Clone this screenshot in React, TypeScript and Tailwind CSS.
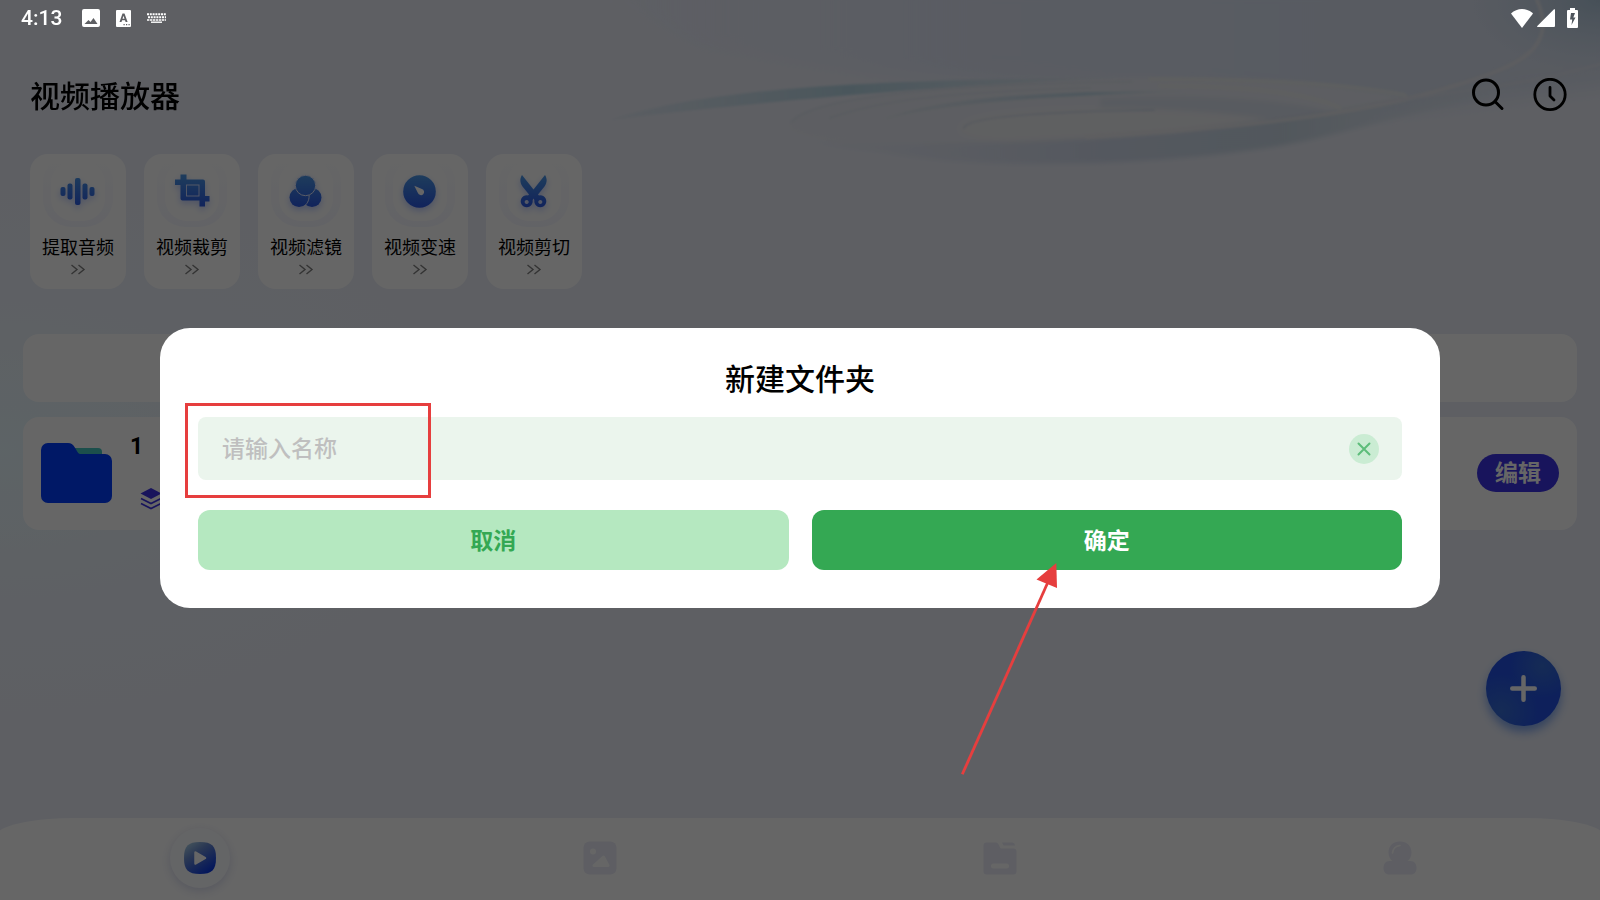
import { useState } from "react"

const tools = [
  { id: "audio", label: "提取音频" },
  { id: "crop", label: "视频裁剪" },
  { id: "filter", label: "视频滤镜" },
  { id: "speed", label: "视频变速" },
  { id: "cut", label: "视频剪切" },
]

const tabs = [
  { id: "video", label: "视频" },
  { id: "photo", label: "图片" },
  { id: "files", label: "文件" },
  { id: "me", label: "我的" },
]

function ToolIcon({ id }: { id: string }) {
  const fill = `url(#tool-${id})`
  return (
    <svg viewBox="0 0 36 38" className="w-9 h-[38px] drop-shadow-[0_3px_3px_rgba(40,90,255,0.3)]" aria-hidden="true">
      <defs>
        <linearGradient id={`tool-${id}`} gradientUnits="userSpaceOnUse" x1="0" y1="0" x2="0" y2="38">
          <stop offset="0" stopColor="#4f9ee8" />
          <stop offset="1" stopColor="#2853e4" />
        </linearGradient>
      </defs>
      {id === "audio" && (
        <g fill={fill}>
          <rect x="0.500" y="15" width="5" height="9" rx="2" />
          <rect x="7.500" y="11.500" width="5" height="16" rx="2" />
          <rect x="15" y="6" width="5.500" height="27" rx="2" />
          <rect x="22.500" y="11.500" width="5" height="16" rx="2" />
          <rect x="29.500" y="15" width="5" height="9" rx="2" />
        </g>
      )}
      {id === "crop" && (
        <g fill={fill}>
          <path
            fillRule="evenodd"
            d="M6.500 2.500h6v5H29a2 2 0 0 1 2 2V24h4.500v5.500H31v5h-5.500v-6H8.500a2 2 0 0 1-2-2V13H1V7.500h5.500zM12 12.500v12h13.500v-12z"
          />
          <rect x="13" y="13.500" width="11.500" height="10" />
        </g>
      )}
      {id === "filter" && (
        <g fill={fill}>
          <circle cx="11" cy="25.500" r="9.500" />
          <circle cx="24" cy="25.500" r="9.500" />
          <path d="M21 22c.6 5-1 9-4.500 12" fill="none" stroke="#dfe6ff" strokeWidth="1" />
          <circle cx="17.500" cy="13.500" r="10.200" stroke="#dfe6ff" strokeWidth="1" />
        </g>
      )}
      {id === "speed" && (
        <g>
          <circle cx="17.500" cy="19.500" r="16.300" fill={fill} />
          <path d="M12.300 13.700l7.600 3.200a3.200 3.200 0 1 1-4 4.100z" fill="#fff" />
        </g>
      )}
      {id === "cut" && (
        <g fill={fill}>
          <path d="M6 3c-2.500 4-2 8 .5 11.500L13 22.500l-1.800 2.200 5 3.800 1.300-2 1.300 2 5-3.800L22 22.500l6.500-8C31 11 31.500 7 29 3L17.500 17.500z" />
          <path
            fillRule="evenodd"
            d="M10.700 23.300a6 6 0 1 0 .01 0zm0 4.600a2 2 0 1 1-.01 0zM24.300 23.300a6 6 0 1 0 .01 0zm0 4.600a2 2 0 1 1-.01 0z"
          />
        </g>
      )}
    </svg>
  )
}

function TabIcon({ id }: { id: string }) {
  if (id === "video") {
    return (
      <span className="w-[60px] h-[60px] rounded-full bg-[#fbfcff] shadow-[0_3px_10px_rgba(130,140,200,0.3)] flex items-center justify-center">
        <svg viewBox="0 0 32 32" className="w-8 h-8" aria-hidden="true">
          <defs>
            <linearGradient id="play" x1="0.1" y1="0" x2="0.8" y2="1">
              <stop offset="0" stopColor="#b0d4e6" />
              <stop offset="0.35" stopColor="#6a8cd0" />
              <stop offset="1" stopColor="#0030e6" />
            </linearGradient>
          </defs>
          <path d="M16 0C28 0 32 4 32 16S28 32 16 32 0 28 0 16 4 0 16 0z" fill="url(#play)" />
          <path d="M11.500 10.500L21 16l-9.500 5.500z" fill="#fff" stroke="#fff" strokeWidth="2.500" strokeLinejoin="round" />
        </svg>
      </span>
    )
  }
  return (
    <svg viewBox="0 0 34 34" className="w-[34px] h-[34px]" fill="#ebecf8" aria-hidden="true">
      {id === "photo" && (
        <>
          <rect x="0.500" y="0.500" width="33" height="33" rx="6" />
          <circle cx="10" cy="10.500" r="3" fill="#fff" />
          <path d="M11 24.500L20.500 16l4.500 8.500z" fill="#fff" stroke="#fff" strokeWidth="3" strokeLinejoin="round" />
        </>
      )}
      {id === "files" && (
        <>
          <path d="M3.500 1.500h9.500c3.500 0 3 6 5.500 6h12a3 3 0 0 1 3 3v20a3 3 0 0 1-3 3h-27a3 3 0 0 1-3-3v-26a3 3 0 0 1 3-3z" />
          <path d="M19 1.500h10.500a3 3 0 0 1 2.500 3H20.500z" />
          <rect x="8" y="22.500" width="18" height="5" rx="2.500" fill="#fff" />
        </>
      )}
      {id === "me" && (
        <>
          <path d="M17 0.500c7 0 11.500 4.500 11.500 11 0 4-1.500 6.500-4 8.500h3c4 0 6 3 6 7s-2 6.500-6 6.500h-21c-4 0-6-2.500-6-6.500s2-7 6-7h3c-2.500-2-4-4.500-4-8.500 0-6.500 4.500-11 11.500-11z" />
          <path d="M9.500 12c.5-4.500 3.500-7 7.500-7.500" fill="none" stroke="#fff" strokeWidth="1.600" strokeLinecap="round" />
        </>
      )}
    </svg>
  )
}

// Soft galaxy-like wallpaper behind the header
function Wallpaper() {
  return (
    <svg className="absolute inset-0 w-full h-full" viewBox="0 0 1600 900" preserveAspectRatio="none" aria-hidden="true">
      <defs>
        <radialGradient id="mint" cx="0" cy="0.500" r="0.300">
          <stop offset="0" stopColor="#e8faff" stopOpacity="0.900" />
          <stop offset="1" stopColor="#ebf2fa" stopOpacity="0" />
        </radialGradient>
        <linearGradient id="sky" x1="0" y1="0" x2="1" y2="0">
          <stop offset="0" stopColor="#e3e9fb" stopOpacity="0" />
          <stop offset="0.400" stopColor="#e0e6f6" />
          <stop offset="1" stopColor="#dae2f1" />
        </linearGradient>
        <linearGradient id="teal" x1="0" y1="0" x2="1" y2="0">
          <stop offset="0" stopColor="#c3dcea" stopOpacity="0.200" />
          <stop offset="0.450" stopColor="#b9d8e6" />
          <stop offset="1" stopColor="#c3dcea" stopOpacity="0" />
        </linearGradient>
        <linearGradient id="azure" x1="0" y1="0" x2="1" y2="0">
          <stop offset="0" stopColor="#cfdcea" stopOpacity="0.300" />
          <stop offset="0.650" stopColor="#c2dae8" />
          <stop offset="1" stopColor="#c3dcea" stopOpacity="0" />
        </linearGradient>
        <linearGradient id="band" x1="0" y1="0" x2="1" y2="0">
          <stop offset="0" stopColor="#dde3f2" stopOpacity="0.200" />
          <stop offset="0.450" stopColor="#d2dbed" />
          <stop offset="0.700" stopColor="#ccdae7" />
          <stop offset="1" stopColor="#d9e3ef" stopOpacity="0.300" />
        </linearGradient>
        <radialGradient id="corner" cx="1" cy="0" r="0.080">
          <stop offset="0" stopColor="#b0c8dc" />
          <stop offset="1" stopColor="#c5d6ea" stopOpacity="0" />
        </radialGradient>
        <filter id="fine" x="-5%" y="-20%" width="110%" height="140%">
          <feGaussianBlur stdDeviation="0.800" />
        </filter>
        <filter id="soft" x="-10%" y="-40%" width="120%" height="180%">
          <feGaussianBlur stdDeviation="2.500" />
        </filter>
        <filter id="softer" x="-20%" y="-40%" width="140%" height="180%">
          <feGaussianBlur stdDeviation="9" />
        </filter>
      </defs>
      <rect width="1600" height="900" fill="#ebeef8" />
      <rect width="1600" height="900" fill="url(#mint)" />
      <path d="M560-20H1620V85L1400 112 1150 88 900 76 700 50z" fill="url(#sky)" filter="url(#softer)" />
      <rect width="1600" height="900" fill="url(#corner)" />
      <g filter="url(#soft)">
        <path d="M790 122C810 100 950 78 1130 78c150 0 240 10 280 22L1180 136 960 146C850 144 780 138 790 122z" fill="#e9ecf4" />
        <path d="M1100 98c110-4 190 2 232 14l-60 8c-50-8-110-12-172-12z" fill="#dde3f0" />
        <path d="M960 128c5-20 150-26 300-10-90 18-180 26-240 24-40-1-62-6-60-14z" fill="#eeeff3" />
        <path d="M800 140c80 8 270 2 380-8 120-14 200-28 310-50v16c-70 12-120 28-180 42-120 26-330 32-430 12-50-4-60-8-80-12z" fill="url(#band)" />
      </g>
      <g fill="none" strokeLinecap="round" filter="url(#fine)">
        <path d="M610 120C720 84 900 80 1140 77 920 86 740 104 610 120z" fill="url(#teal)" />
        <path d="M884 119c60-24 180-28 310-28-120 5-230 8-310 28z" fill="url(#azure)" />
        <path d="M792 122c16-20 120-38 340-40M830 118c50-18 120-26 260-30" stroke="#dfe5f0" strokeWidth="2" />
        <path d="M964 128c2-10 60-16 190-18" stroke="#cdd9e7" strokeWidth="1.400" />
        <path d="M1150 79c120 0 200 6 255 16M1160 86c90 0 150 8 180 22" stroke="#ecefee" strokeWidth="4" opacity="0.700" />
        <path d="M1537 0c22 50-20 66-80 85-100 32-220 42-370 52" stroke="#ecebee" strokeWidth="4" opacity="0.700" />
        <path d="M1600 64c-60 18-140 28-230 40" stroke="#e3e6ef" strokeWidth="3" opacity="0.700" />
      </g>
    </svg>
  )
}

function StatusBar() {
  return (
    <div className="fixed inset-x-0 top-0 z-20 h-9 pl-[21px] pr-[22px] flex items-center justify-between text-white">
      <div className="flex items-center">
        <span className="w-[61px] text-[21px] leading-9 font-medium">4:13</span>
        <svg viewBox="0 0 18 18" className="w-[18px] h-[18px] mr-4" aria-hidden="true">
          <path fillRule="evenodd" fill="#fff" d="M2 0h14a2 2 0 0 1 2 2v14a2 2 0 0 1-2 2H2a2 2 0 0 1-2-2V2a2 2 0 0 1 2-2zM2.500 15h13l-4-6-3 4-2-2z" />
        </svg>
        <svg viewBox="0 0 15 17" className="w-[15px] h-[17px] mr-4" aria-hidden="true">
          <path fillRule="evenodd" fill="#fff" d="M1 0h13a1 1 0 0 1 1 1v15a1 1 0 0 1-1 1H1a1 1 0 0 1-1-1V1a1 1 0 0 1 1-1zM6.500 3.500L3.500 12h2l.6-1.700h2.900l.6 1.700h2L8.500 3.500zm1 2.200l1 3h-2zM7.500 14v1.200h1.200V14zm2.500 0v1.200h1.200V14zm2.500 0v1.200h1.200V14z" />
        </svg>
        <svg viewBox="0 0 19 10" className="w-[19px] h-[10px]" aria-hidden="true">
          <g stroke="#fff" fill="none" strokeWidth="2">
            <path d="M0 1.200h19" strokeDasharray="2 0.800" />
            <path d="M1 4.200h18" strokeDasharray="2 0.800" />
            <path d="M0 7h19" strokeDasharray="2.400 0.600" strokeWidth="1.600" />
            <path d="M4 9.200h11" strokeWidth="1.400" />
          </g>
        </svg>
      </div>
      <div className="flex items-center">
        <svg viewBox="0 0 22 19" className="w-[22px] h-[19px] mr-1" fill="#fff" aria-hidden="true">
          <path d="M0 4.500C3 1.500 7 0 11 0s8 1.500 11 4.500L11 19z" />
        </svg>
        <svg viewBox="0 0 18 18" className="w-[18px] h-[18px] mr-3" fill="#fff" aria-hidden="true">
          <path d="M17 0.300a.6.6 0 0 1 1 .5V17a1 1 0 0 1-1 1H.8a.6.6 0 0 1-.5-1z" />
        </svg>
        <svg viewBox="0 0 11 20" className="w-[11px] h-5" aria-hidden="true">
          <path fillRule="evenodd" fill="#fff" d="M3 0h5v2h2a1 1 0 0 1 1 1v16a1 1 0 0 1-1 1H1a1 1 0 0 1-1-1V3a1 1 0 0 1 1-1h2zM4 5L3 11.500h2.200L4.500 17 8.500 9.500H6.300L8 5z" />
        </svg>
      </div>
    </div>
  )
}

function NewFolderModal() {
  const [name, setName] = useState("")

  return (
    <div className="fixed inset-0 z-10 pt-9 bg-black/60 flex items-center justify-center">
      <div role="dialog" aria-labelledby="modal-title" className="relative w-4/5 rounded-[30px] bg-white px-[38px] pt-[30px] pb-[38px]">
        <h2 id="modal-title" className="text-center text-[30px] leading-[43px] font-medium text-black">
          新建文件夹
        </h2>
        <div className="relative mt-4">
          <div className="h-[63px] rounded-lg bg-[#ebf5ed] pl-6 pr-[23px] flex items-center">
            <input
              aria-label="文件夹名称"
              className="flex-1 min-w-0 pt-1 bg-transparent outline-none text-[23px] font-medium text-black placeholder:text-[#bfbfbf]"
              placeholder="请输入名称"
              value={name}
              onChange={(e) => setName(e.target.value)}
            />
            <button aria-label="清除" className="w-[30px] h-[30px] rounded-full bg-[#caecd3] flex items-center justify-center" onClick={() => setName("")}>
              <svg viewBox="0 0 14 14" className="w-[14px] h-[14px]" aria-hidden="true">
                <path d="M1.500 1.500l11 11M12.500 1.500l-11 11" stroke="#5dbd7a" strokeWidth="2" strokeLinecap="round" />
              </svg>
            </button>
          </div>
          <div className="absolute -left-[13px] -top-[14px] w-[246px] h-[95px] border-3 border-[#e63e3e] pointer-events-none" />
        </div>
        <div className="mt-[30px] flex gap-[23px]">
          <button className="flex-1 h-[60px] pt-1 rounded-xl bg-[#b5e8c0] text-[23px] font-bold text-[#34a853]">取消</button>
          <button className="flex-1 h-[60px] pt-1 rounded-xl bg-[#34a853] text-[23px] font-bold text-white">确定</button>
        </div>
        {/* Pointer to the confirm button */}
        <svg viewBox="0 0 100 214" className="absolute left-[calc(50%+160px)] top-[234px] w-[100px] h-[214px] pointer-events-none" aria-hidden="true">
          <path d="M2.300 212.300L88 20" stroke="#e63e3e" strokeWidth="2.800" />
          <path d="M96.300 1L76.500 17.500l20.500 8.500z" fill="#e63e3e" />
        </svg>
      </div>
    </div>
  )
}

export default function App() {
  return (
    <div className="relative min-h-screen overflow-hidden flex flex-col font-[Roboto,'Noto_Sans_CJK_SC',sans-serif] text-black">
      <Wallpaper />
      <StatusBar />

      <header className="relative mt-9 h-[118px] pl-[30px] pr-[33px] flex items-center justify-between">
        <h1 className="pt-0.5 text-[30px] leading-[43px] font-medium">视频播放器</h1>
        <div className="flex items-center gap-7">
          <button aria-label="搜索">
            <svg viewBox="0 0 34 34" className="w-[34px] h-[34px]" fill="none" stroke="#000" strokeWidth="3" strokeLinecap="round" aria-hidden="true">
              <circle cx="15" cy="14.500" r="12.500" />
              <path d="M24.500 24l6.500 6.500" />
            </svg>
          </button>
          <button aria-label="历史记录">
            <svg viewBox="0 0 34 34" className="w-[34px] h-[34px]" fill="none" stroke="#000" strokeWidth="2.800" strokeLinecap="round" strokeLinejoin="round" aria-hidden="true">
              <circle cx="17" cy="16.500" r="15.200" />
              <path d="M17 9.500V18l4 4" />
            </svg>
          </button>
        </div>
      </header>

      {/* Tool shortcuts */}
      <section className="relative px-[30px] flex gap-[18px]">
        {tools.map((tool) => (
          <button key={tool.id} className="w-24 h-[135px] rounded-[18px] bg-white flex flex-col items-center">
            <span className="w-[70px] h-[73px] rounded-[28px] bg-linear-to-b from-white to-[#f6f7fe] flex items-center justify-center">
              <span className="w-[54px] h-[60px] rounded-[22px] bg-white flex items-center justify-center">
                <ToolIcon id={tool.id} />
              </span>
            </span>
            <span className="mt-2 text-[18px] leading-[26px]">{tool.label}</span>
            <svg viewBox="0 0 16 12" className="mt-[3px] w-4 h-3" fill="none" stroke="#808080" strokeWidth="1.400" aria-hidden="true">
              <path d="M1.500 1L7 5.500 1.500 10M8.500 1L14 5.500 8.500 10" />
            </svg>
          </button>
        ))}
      </section>

      {/* Folder list */}
      <section className="relative mt-[45px] px-[23px] flex flex-col gap-[15px]">
        <div className="h-[68px] rounded-2xl bg-white" />
        <div className="h-[113px] rounded-2xl bg-white px-[18px] pb-0.5 flex items-center">
          <svg viewBox="0 0 72 60" className="w-[72px] h-[60px] shrink-0" aria-hidden="true">
            <path d="M30 5h27a4 4 0 0 1 4 4v10H36z" fill="#46c6bf" />
            <path d="M7 0h20c3 0 5 1.500 6.500 4l3 5c1 1.500 1.500 2 3.500 2h24a7 7 0 0 1 7 7v35a7 7 0 0 1-7 7H7a7 7 0 0 1-7-7V7a7 7 0 0 1 7-7z" fill="#003cff" />
          </svg>
          <div className="ml-[17px] flex-1 h-20 flex flex-col justify-between">
            <span className="text-[23px] leading-[27px] font-bold">1</span>
            <svg viewBox="0 0 22 24" className="ml-2.5 mb-0.5 w-[22px] h-6" aria-hidden="true">
              <path d="M11 1l10.500 5.500L11 12 .5 6.500z" fill="#3c32e6" />
              <path d="M1 11.500l10 5 10-5M1 16.500l10 5 10-5" fill="none" stroke="#3c32e6" strokeWidth="1.700" />
            </svg>
          </div>
          <button className="w-[82px] h-[38px] rounded-full bg-[#3c32e6] pt-0.5 text-[23px] leading-9 font-bold text-white">编辑</button>
        </div>
      </section>

      <button
        aria-label="新建"
        className="absolute right-[39px] bottom-[174px] w-[75px] h-[75px] rounded-full bg-[radial-gradient(circle_at_20%_80%,#366cd4,transparent_45%),radial-gradient(circle_at_75%_20%,#366cd4,transparent_40%)] bg-[#2351e4] shadow-[0_6px_10px_rgba(60,120,230,0.6)] flex items-center justify-center"
      >
        <svg viewBox="0 0 27 27" className="w-[27px] h-[27px]" stroke="#fff" strokeWidth="4.500" strokeLinecap="round" aria-hidden="true">
          <path d="M13.500 2.250v22.500M2.250 13.500h22.500" />
        </svg>
      </button>

      <nav className="relative mt-auto -mx-1 px-1 pb-0.5 h-[82px] bg-white [border-radius:80px_80px_0_0/18px_18px_0_0] flex">
        {tabs.map((tab) => (
          <a key={tab.id} href={`#${tab.id}`} aria-label={tab.label} className="flex-1 flex items-center justify-center">
            <TabIcon id={tab.id} />
          </a>
        ))}
      </nav>

      <NewFolderModal />
    </div>
  )
}
